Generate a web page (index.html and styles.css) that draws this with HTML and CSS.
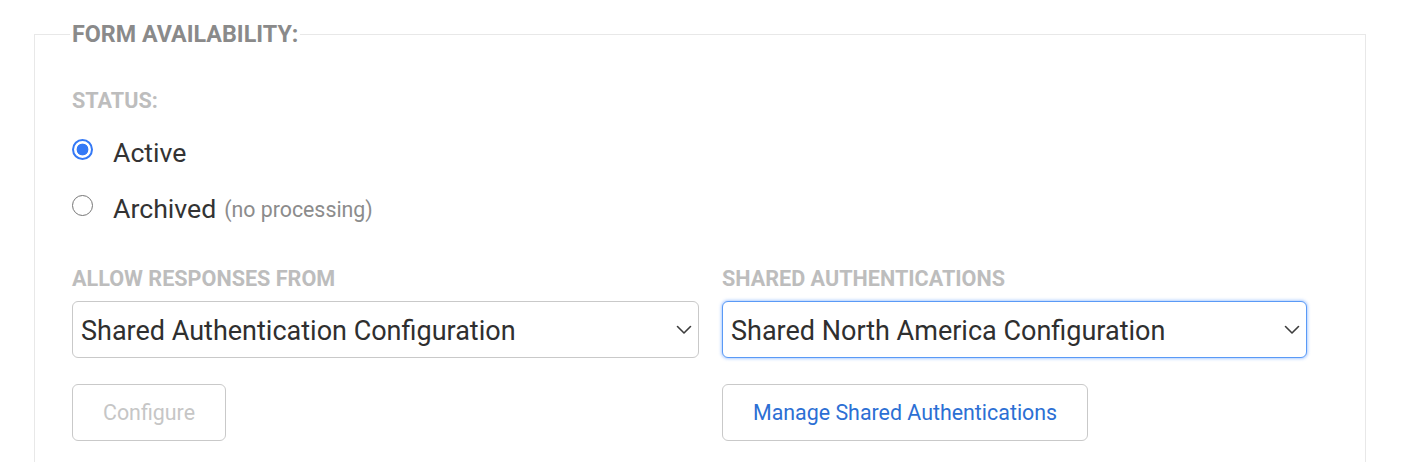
FILE: index.html
```html
<!DOCTYPE html>
<html lang="en">
<head>
<meta charset="utf-8">
<title>Form availability</title>
<link rel="stylesheet" href="styles.css">
</head>
<body>
<div class="page">
  <fieldset class="availability">
    <legend class="availability-title">FORM AVAILABILITY:</legend>
    <div class="field-label">STATUS:</div>
    <div class="radio-list">
      <label class="radio-option">
        <input type="radio" name="status" class="radio" checked>
        <span class="radio-text">Active</span>
      </label>
      <label class="radio-option">
        <input type="radio" name="status" class="radio">
        <span class="radio-text">Archived</span>
        <span class="radio-note">(no processing)</span>
      </label>
    </div>
    <div class="columns">
      <div class="column">
        <div class="field-label">ALLOW RESPONSES FROM</div>
        <div class="select select-wide" role="combobox">
          <span class="select-value">Shared Authentication Configuration</span>
          <svg class="chevron" width="16" height="10" viewBox="0 0 16 10"><path d="M1.5 1.5 L8 8 L14.5 1.5" fill="none" stroke="#3d3d3d" stroke-width="1.6" stroke-linecap="round" stroke-linejoin="round"/></svg>
        </div>
        <button class="btn btn-disabled" type="button">Configure</button>
      </div>
      <div class="column">
        <div class="field-label">SHARED AUTHENTICATIONS</div>
        <div class="select select-focus" role="combobox">
          <span class="select-value">Shared North America Configuration</span>
          <svg class="chevron" width="16" height="10" viewBox="0 0 16 10"><path d="M1.5 1.5 L8 8 L14.5 1.5" fill="none" stroke="#3d3d3d" stroke-width="1.6" stroke-linecap="round" stroke-linejoin="round"/></svg>
        </div>
        <button class="btn btn-link" type="button">Manage Shared Authentications</button>
      </div>
    </div>
  </fieldset>
</div>
</body>
</html>
```

FILE: styles.css
```css
* { box-sizing: border-box; }

html, body {
  margin: 0;
  background: #ffffff;
  font-family: Roboto, "Liberation Sans", Arial, sans-serif;
  color: #333333;
}

.page {
  padding: 20px 44px 0 34px;
}

.availability {
  margin: 0;
  border: 1px solid #e8e8e8;
  padding: 40px 37px 60px 37px;
  min-height: 500px;
}

.availability-title {
  margin-left: -2px;
  padding: 0 2px;
  font-size: 23.3px;
  line-height: 28px;
  font-weight: 700;
  color: #8a8a8a;
}

.field-label {
  font-size: 21.6px;
  line-height: 25.6px;
  font-weight: 700;
  color: #bdbdbd;
}

.radio-list {
  display: flex;
  flex-direction: column;
  gap: 24px;
  margin-top: 23px;
}

.radio-option {
  display: flex;
  align-items: center;
  height: 32px;
  cursor: pointer;
}

.radio {
  appearance: none;
  -webkit-appearance: none;
  margin: 0 20px 0 0;
  width: 21px;
  height: 21px;
  border-radius: 50%;
  border: 1.5px solid #767676;
  background: #ffffff;
  position: relative;
  top: -3px;
  flex: none;
}

.radio:checked {
  border: 2px solid #3479f6;
  background: radial-gradient(circle, #3479f6 0 5.6px, #ffffff 6.2px);
}

.radio-text {
  font-size: 26.67px;
  line-height: 32px;
  color: #333333;
}

.radio-note {
  margin-left: 8px;
  font-size: 21.33px;
  line-height: 32px;
  color: #8c8c8c;
  position: relative;
  top: 1px;
}

.columns {
  display: grid;
  grid-template-columns: 627px 585px;
  column-gap: 23px;
  margin-top: 41px;
}

.column {
  display: flex;
  flex-direction: column;
  align-items: flex-start;
}

.select {
  margin-top: 10px;
  display: flex;
  align-items: center;
  justify-content: space-between;
  width: 100%;
  height: 57px;
  padding: 0 6px 0 8px;
  border: 1px solid #c9c9c9;
  border-radius: 6px;
  background: #ffffff;
}

.select-focus {
  border-color: #5a9af6;
  box-shadow: 0 0 3px 1px rgba(77, 144, 254, 0.45);
}

.select-value {
  font-size: 27px;
  line-height: 32px;
  padding-top: 2px;
  color: #2f2f2f;
  white-space: nowrap;
}

.chevron {
  flex: none;
}

.btn {
  margin-top: 26px;
  height: 57px;
  padding: 0 30px;
  border: 1px solid #c9c9c9;
  border-radius: 6px;
  background: #ffffff;
  font-family: Roboto, "Liberation Sans", Arial, sans-serif;
  font-size: 21.4px;
}

.btn-disabled {
  color: #c6c6c6;
}

.btn-link {
  color: #2c6fd4;
}
```
